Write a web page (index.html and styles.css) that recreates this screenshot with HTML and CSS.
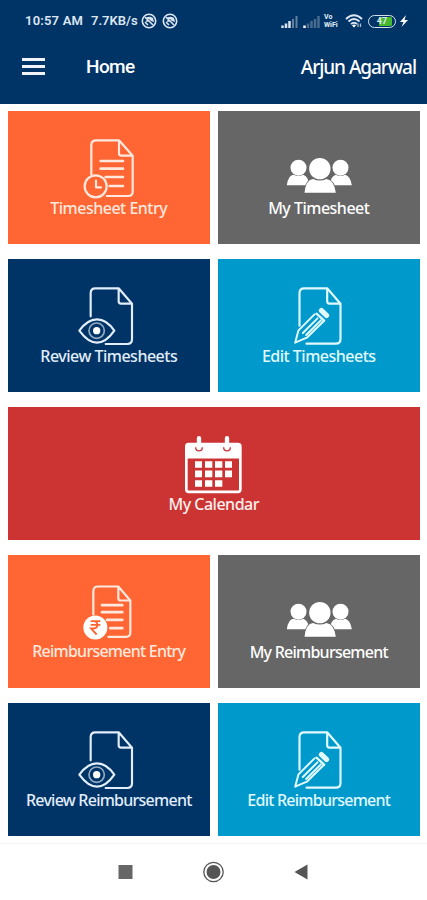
FILE: index.html
```
<!DOCTYPE html>
<html lang="en">
<head>
<meta charset="utf-8">
<title>Home</title>
<link rel="stylesheet" href="styles.css">
</head>
<body>
<svg class="defs" aria-hidden="true">
  <symbol id="entry" viewBox="222 93 210 195">
    <g fill="none" stroke="currentColor" stroke-width="6.5" stroke-linecap="round" stroke-linejoin="round">
      <path d="M274 208V120Q274 106 288 106H357L398 152V260Q398 273 384 273H320M357 106V145Q357 152 364 152H398"/>
      <path d="M302 168H369M302 191H369M317 216H369M329 243H369" stroke-width="8"/>
      <circle cx="287" cy="244" r="33"/>
      <path d="M288 227V247H303"/>
    </g>
  </symbol>
  <symbol id="rupee" viewBox="222 88.5 210 195">
    <g fill="none" stroke="currentColor" stroke-width="6.5" stroke-linecap="round" stroke-linejoin="round">
      <path d="M280 192V122Q280 108 294 108H355L391 150V246Q391 259 378 259H325M355 108V143Q355 150 362 150H391"/>
      <path d="M306 164H367M306 185H367M321 208H367M331 233H367" stroke-width="8"/>
    </g>
    <circle cx="286" cy="231" r="36" fill="#fff"/>
    <path d="M272 212H301M272 223H301M273 212H281Q292 213 292 223Q292 234 281 234H273L290 252" fill="none" stroke="#ff6633" stroke-width="5.5"/>
  </symbol>
  <symbol id="review" viewBox="222 87 210 195">
    <g fill="none" stroke="currentColor" stroke-width="6.5" stroke-linecap="round" stroke-linejoin="round">
      <path d="M272 184V114Q272 100 286 100H356L396 146V253Q396 267 382 267H317M356 100V139Q356 146 363 146H396"/>
      <path d="M238 227Q262 193 291 193T343 227Q318 263 291 263T238 227Z"/>
      <circle cx="290" cy="227" r="23" stroke-width="5" opacity=".65"/>
    </g>
    <circle cx="290" cy="227" r="11" fill="#fff"/>
  </symbol>
  <symbol id="edit" viewBox="213.5 87 210 195">
    <g fill="none" stroke="currentColor" stroke-width="6.5" stroke-linecap="round" stroke-linejoin="round">
      <path d="M260 212V114Q260 100 274 100H343L383 146V252Q383 266 369 266H281M343 100V139Q343 146 350 146H383"/>
      <path d="M305 178L257 226L247 263L282 248L332 199M314 190L270 234M324 196L280 240" stroke-width="6"/>
      <path d="M311 176L334 197" stroke-width="7"/>
      <path d="M326 167L341 181" stroke-width="16"/>
    </g>
  </symbol>
  <symbol id="people" viewBox="213.5 93 210 195">
    <g fill="#fff">
      <circle cx="257" cy="188" r="24"/><circle cx="383" cy="188" r="24"/>
      <path d="M222 241Q226 209 243 209Q257 217 271 209Q286 213 290 241ZM350 241Q354 213 369 209Q383 217 397 209Q413 213 417 241Z"/>
      <g stroke="#666" stroke-width="4" paint-order="stroke">
        <path d="M275 263Q279 224 301 222Q321 231 341 222Q364 226 369 263Z"/>
        <circle cx="321" cy="191" r="32"/>
      </g>
    </g>
  </symbol>
  <symbol id="calendar" viewBox="207 94.5 210 195">
    <rect x="229" y="131" width="162" height="143" rx="7" fill="none" stroke="#fff" stroke-width="8"/>
    <path d="M228 130H392V174H228Z" fill="#fff"/>
    <path d="M267 113V143M351 113V143" stroke="#fff" stroke-width="13" stroke-linecap="round"/>
    <path d="M257 140Q257 151 267 151T277 140M341 140Q341 151 351 151T361 140" fill="none" stroke="#cc3333" stroke-width="4"/>
    <path d="M255 192H276M285 192H307M315 192H337M345 192H366M255 220H276M285 220H307M315 220H337M345 220H366M255 249H276M285 249H307M315 249H337" stroke="#fff" stroke-width="20"/>
  </symbol>
  <symbol id="muted" viewBox="0 0 16 16">
    <circle cx="8" cy="8" r="6.7" fill="none" stroke="#dce6f2" stroke-width="1.6"/>
    <path d="M4 6Q7 2 12 5L13 9L10 8L8 6Z" fill="#dce6f2"/>
    <path d="M4 4L12 12M4 9L7 12M8 8L5 8" fill="none" stroke="#dce6f2" stroke-width="1.6"/>
  </symbol>
</svg>

<header class="top">
  <div class="status">
    <span class="time">10:57 AM</span>
    <span class="speed">7.7KB/s</span>
    <svg class="mute"><use href="#muted"/></svg>
    <svg class="mute mute-second"><use href="#muted"/></svg>
    <svg class="signal" viewBox="0 0 17 12"><path d="M1.5 12V9.500M5 12V7.500M8.500 12V5" stroke="#dce6f2" stroke-width="2.500"/><path d="M12 12V3M15.500 12V0" stroke="#63819f" stroke-width="2"/></svg>
    <svg class="signal signal-second" viewBox="0 0 17 12"><path d="M1.500 12V9.500" stroke="#fff" stroke-width="2.500"/><path d="M5 12V7.500M8.500 12V5M12 12V3M15.500 12V0" stroke="#496b8e" stroke-width="2.500"/></svg>
    <span class="vowifi"><span>Vo</span><span>WiFi</span></span>
    <svg class="wifi" viewBox="0 0 18 14"><path d="M1 5Q9-2.500 17 5M3.500 7.500Q9 2.500 14.500 7.500M6 10Q9 7.500 12 10" fill="none" stroke="#dce6f2" stroke-width="2"/><path d="M7 11.500Q9 9.500 11 11.500L9 13.500Z" fill="#fff"/><path d="M13 9.500V13M15.500 9.500V13" stroke="#a9bacd" stroke-width="1.300"/></svg>
    <span class="battery">47</span>
    <svg class="bolt" viewBox="0 0 8 12"><path d="M6 0L0 7H3.500L1.500 12L8 5H4.500Z" fill="#fff"/></svg>
  </div>
  <div class="bar">
    <div class="menu"><i></i><i></i><i></i></div>
    <span class="title">Home</span>
    <span class="user">Arjun Agarwal</span>
  </div>
</header>

<main class="grid">
  <div class="tile orange"><svg><use href="#entry"/></svg><span>Timesheet Entry</span></div>
  <div class="tile gray"><svg><use href="#people"/></svg><span>My Timesheet</span></div>
  <div class="tile navy"><svg><use href="#review"/></svg><span>Review Timesheets</span></div>
  <div class="tile blue"><svg><use href="#edit"/></svg><span>Edit Timesheets</span></div>
  <div class="tile red"><svg><use href="#calendar"/></svg><span>My Calendar</span></div>
  <div class="tile orange long raised"><svg><use href="#rupee"/></svg><span>Reimbursement Entry</span></div>
  <div class="tile gray long people-low"><svg><use href="#people"/></svg><span>My Reimbursement</span></div>
  <div class="tile navy long"><svg><use href="#review"/></svg><span>Review Reimbursement</span></div>
  <div class="tile blue long"><svg><use href="#edit"/></svg><span>Edit Reimbursement</span></div>
</main>

<nav class="nav">
  <svg viewBox="0 0 200 24">
    <rect x="4.500" y="5" width="14" height="14" fill="#666"/>
    <circle cx="99.500" cy="12" r="9.700" fill="none" stroke="#555" stroke-width="1.300"/>
    <circle cx="99.500" cy="12" r="7" fill="#555"/>
    <path d="M180.500 12L193.500 4.500V19.500Z" fill="#555"/>
  </svg>
</nav>
</body>
</html>
```
FILE: styles.css
```
* { box-sizing: border-box; }
body { margin: 0; width: 427px; height: 900px; overflow: hidden; background: #fff; font-family: "Noto Sans", sans-serif; color: #fff; }
.defs { position: absolute; width: 0; height: 0; }
.top { height: 104px; background: #003366; }
.status { height: 42px; display: flex; align-items: center; padding-left: 25px; font: 600 13px/42px Roboto, sans-serif; color: #dce6f2; }
.time { width: 66px; letter-spacing: .2px; }
.speed { width: 50px; }
.mute { width: 16px; height: 16px; }
.mute-second { margin-left: 5px; }
.signal { width: 17px; height: 12px; margin-left: 103px; margin-top: 2px; }
.signal-second { margin-left: 5px; }
.vowifi { display: flex; flex-direction: column; margin-left: 4px; width: 17px; font-size: 7px; line-height: 8px; font-weight: 800; }
.wifi { width: 18px; height: 14px; margin-left: 4px; }
.battery { margin-left: 5px; width: 28px; height: 13px; border: 1.5px solid #d5e2ee; border-radius: 7px; box-shadow: inset 0 0 0 1px #003366; background: linear-gradient(90deg, #003366 38%, #46b82e 38% 88%, #003366 88%); font-size: 9px; line-height: 10px; text-align: center; font-weight: 700; }
.bolt { width: 8px; height: 12px; margin-left: 4px; }
.bar { height: 50px; display: flex; align-items: center; padding: 0 11px 0 22px; }
.menu { display: flex; flex-direction: column; gap: 4px; width: 23px; margin-right: 41px; margin-top: -2px; }
.menu i { height: 3px; background: #f0f4fa; }
.title, .user { font-size: 19px; line-height: 50px; }
.title { font-family: Roboto, sans-serif; letter-spacing: -.6px; font-weight: 500; }
.user { margin-left: auto; letter-spacing: -1.050px; font-weight: 500; }
.grid { display: grid; grid-template-columns: 202.500px 202.500px; grid-auto-rows: 133.250px; gap: 14.750px 7.500px; padding: 111px 0 0 7.500px; margin-top: -104px; }
.tile { display: flex; flex-direction: column; align-items: center; padding-top: 25px; }
.tile svg { width: 70px; height: 65px; flex: none; }
.tile span { font-size: 16px; font-weight: 500; line-height: 22px; margin-top: -4px; white-space: nowrap; letter-spacing: -.5px; }
.long span { letter-spacing: -.750px; }
.raised span { margin-top: -5px; }
.orange { background: #ff6633; color: #ffe9df; }
.gray { background: #666; color: #fff; }
.navy { background: #003366; color: #e2eefb; }
.blue { background: #0099cc; color: #e0faff; }
.red { background: #cc3333; color: #fff0ee; grid-column: span 2; }
.red { margin-right: 0; }
.nav { height: 57px; margin-top: 7px; border-top: 1px solid #f7f3f3; display: flex; align-items: center; justify-content: center; }
.nav svg { width: 200px; height: 24px; }
```
